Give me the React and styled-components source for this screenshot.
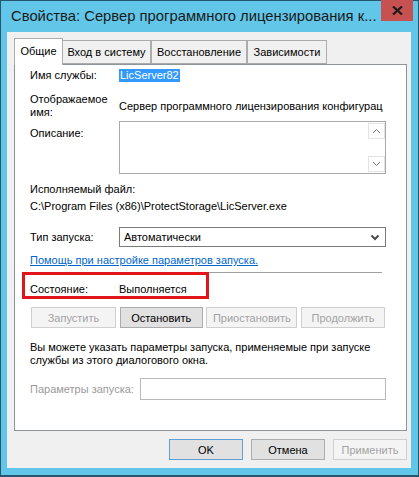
import React from "react";
import styled, {createGlobalStyle} from "styled-components";

const GlobalStyle = createGlobalStyle`
  html, body {
    margin: 0;
    padding: 0;
    background: #ffffff;
  }
  * {
    box-sizing: border-box;
  }
`

const tabs = ["Общие", "Вход в систему", "Восстановление", "Зависимости"];
const tabWidths = [49, 89, 96, 80];

const actions = [
  {label: "Запустить", enabled: false, w: 85},
  {label: "Остановить", enabled: true, w: 83},
  {label: "Приостановить", enabled: false, w: 91},
  {label: "Продолжить", enabled: false, w: 84},
];

export default function App() {
  return (
    <>
      <GlobalStyle />
      <Window>
        <TitleBar>
          <Title>Свойства: Сервер программного лицензирования к...</Title>
          <CloseButton>
            <svg width="11" height="9" viewBox="0 0 11 9">
              <path d="M1 0.5 L10 8.5 M10 0.5 L1 8.5" stroke="#1b1b1b" strokeWidth="2.2" />
            </svg>
          </CloseButton>
        </TitleBar>

        <Client>
          <TabStrip>
            {tabs.map((t, i) => (
              <Tab key={t} $active={i === 0} $w={tabWidths[i]}>{t}</Tab>
            ))}
          </TabStrip>

          <Panel>
            <Row $mt={0}>
              <Label>Имя службы:</Label>
              <Selected>LicServer82</Selected>
            </Row>

            <Row $mt={10}>
              <Label $multi>Отображаемое<br />имя:</Label>
              <Value>Сервер программного лицензирования конфигурац</Value>
            </Row>

            <Row $mt={2} $start>
              <Label $top={4}>Описание:</Label>
              <TextArea>
                <ScrollBar>
                  <ScrollBtn>
                    <svg width="9" height="6" viewBox="0 0 9 6">
                      <path d="M1 5 L4.5 1.5 L8 5" fill="none" stroke="#777" strokeWidth="1" />
                    </svg>
                  </ScrollBtn>
                  <ScrollBtn>
                    <svg width="9" height="6" viewBox="0 0 9 6">
                      <path d="M1 1 L4.5 4.5 L8 1" fill="none" stroke="#777" strokeWidth="1" />
                    </svg>
                  </ScrollBtn>
                </ScrollBar>
              </TextArea>
            </Row>

            <Line $mt={7}>Исполняемый файл:</Line>
            <Line $mt={1}>C:\Program Files (x86)\ProtectStorage\LicServer.exe</Line>

            <Row $mt={13}>
              <Label>Тип запуска:</Label>
              <Combo>
                <span>Автоматически</span>
                <svg width="10" height="7" viewBox="0 0 10 7">
                  <path d="M1.5 1.5 L5 5 L8.5 1.5" fill="none" stroke="#4a4a4a" strokeWidth="2" />
                </svg>
              </Combo>
            </Row>

            <Link $mt={5}>Помощь при настройке параметров запуска.</Link>
            <Separator />

            <StatusRow>
              <Label>Состояние:</Label>
              <Value>Выполняется</Value>
              <Highlight />
            </StatusRow>

            <ActionRow>
              {actions.map(a => (
                <ActionButton key={a.label} $enabled={a.enabled} $w={a.w}>{a.label}</ActionButton>
              ))}
            </ActionRow>

            <Note>
              Вы можете указать параметры запуска, применяемые при запуске<br />
              службы из этого диалогового окна.
            </Note>

            <Row $mt={11}>
              <ParamLabel>Параметры запуска:</ParamLabel>
              <ParamInput />
            </Row>
          </Panel>

          <Footer>
            <DialogButton $default>OK</DialogButton>
            <DialogButton>Отмена</DialogButton>
            <DialogButton $disabled>Применить</DialogButton>
          </Footer>
        </Client>
      </Window>
    </>
  );
}

const Window = styled.div`
  width: 419px;
  height: 477px;
  background: #62c6e8;
  border: 1px solid #24566d;
  border-bottom-width: 2px;
  display: flex;
  flex-direction: column;
  font-family: "Liberation Sans", Arial, sans-serif;
  font-size: 11px;
  color: #000;
`

const TitleBar = styled.div`
  height: 31px;
  display: flex;
  align-items: flex-start;
  justify-content: space-between;
  padding-right: 5px;
`

const Title = styled.div`
  padding-left: 10px;
  padding-top: 7px;
  font-size: 14.8px;
  color: #1a1a1a;
  white-space: nowrap;
`

const CloseButton = styled.div`
  width: 32px;
  height: 21px;
  margin-top: -1px;
  background: #c75050;
  display: flex;
  align-items: center;
  justify-content: center;
`

const Client = styled.div`
  flex: 1;
  margin: 0 7px 7px 6px;
  background: #f0f0f0;
  display: flex;
  flex-direction: column;
  padding: 6px 4px 8px 7px;
`

const TabStrip = styled.div`
  display: flex;
  align-items: flex-end;
  height: 27px;
  padding-left: 1px;
  margin-bottom: -1px;
  position: relative;
  z-index: 1;
`

const Tab = styled.div`
  width: ${p => p.$w}px;
  height: ${p => (p.$active ? 27 : 24)}px;
  margin-left: ${p => (p.$active ? -1 : 0)}px;
  margin-right: ${p => (p.$active ? -1 : 0)}px;
  margin-bottom: ${p => (p.$active ? 0 : 1)}px;
  padding-top: ${p => (p.$active ? 6 : 5)}px;
  text-align: center;
  background: ${p => (p.$active ? "#ffffff" : "#f0f0f0")};
  border: 1px solid #acacac;
  border-bottom: ${p => (p.$active ? "none" : "1px solid #acacac")};
  position: relative;
  z-index: ${p => (p.$active ? 2 : 1)};
  white-space: nowrap;
  color: #000;
`

const Panel = styled.div`
  height: 367px;
  background: #ffffff;
  border: 1px solid #8f959b;
  padding: 2px 20px 0 15px;
  display: flex;
  flex-direction: column;
`

const Row = styled.div`
  display: flex;
  align-items: ${p => (p.$start ? "flex-start" : "center")};
  margin-top: ${p => p.$mt}px;
`

const Label = styled.div`
  width: 89px;
  flex-shrink: 0;
  line-height: ${p => (p.$multi ? 13 : 16)}px;
  padding-top: ${p => p.$top || 0}px;
`

const Value = styled.div`
  line-height: 16px;
  max-width: 267px;
  white-space: nowrap;
  overflow: hidden;
`

const Selected = styled.span`
  background: #3399ff;
  color: #ffffff;
  line-height: 13px;
  padding: 0 1px;
`

const TextArea = styled.div`
  width: 267px;
  height: 53px;
  border: 1px solid #a9a9a9;
  display: flex;
  justify-content: flex-end;
`

const ScrollBar = styled.div`
  width: 17px;
  display: flex;
  flex-direction: column;
  justify-content: space-between;
  padding: 1px 0;
`

const ScrollBtn = styled.div`
  height: 16px;
  border: 1px solid #e3e3e3;
  display: flex;
  align-items: center;
  justify-content: center;
`

const Line = styled.div`
  margin-top: ${p => p.$mt}px;
  line-height: 16px;
  white-space: nowrap;
`

const Combo = styled.div`
  width: 267px;
  height: 20px;
  border: 1px solid #7a7a7a;
  display: flex;
  align-items: center;
  justify-content: space-between;
  padding: 0 5px 0 4px;
`

const Link = styled.div`
  margin-top: ${p => p.$mt}px;
  line-height: 16px;
  color: #0066cc;
  text-decoration: underline;
`

const Separator = styled.div`
  margin-top: 4px;
  width: 352px;
  height: 1px;
  background: #a0a0a0;
`

const StatusRow = styled.div`
  position: relative;
  display: flex;
  align-items: center;
  margin-top: 8px;
`

const Highlight = styled.div`
  position: absolute;
  left: -8px;
  top: -9px;
  width: 187px;
  height: 27px;
  border: 3px solid #e4141b;
`

const ActionRow = styled.div`
  display: flex;
  justify-content: space-between;
  width: 355px;
  margin-top: 10px;
  padding-left: 1px;
`

const ActionButton = styled.div`
  width: ${p => p.$w}px;
  height: 21px;
  display: flex;
  align-items: center;
  justify-content: center;
  border: 1px solid ${p => (p.$enabled ? "#acacac" : "#cfcfcf")};
  background: ${p => (p.$enabled ? "#e1e1e1" : "#f4f4f4")};
  color: ${p => (p.$enabled ? "#000" : "#a3a3a3")};
`

const Note = styled.div`
  margin-top: 13px;
  line-height: 13px;
  white-space: nowrap;
`

const ParamLabel = styled.div`
  width: 110px;
  color: #9a9a9a;
  flex-shrink: 0;
  white-space: nowrap;
`

const ParamInput = styled.div`
  width: 246px;
  height: 22px;
  border: 1px solid #b9b9b9;
`

const Footer = styled.div`
  display: flex;
  justify-content: flex-end;
  gap: 8px;
  margin-top: 8px;
`

const DialogButton = styled.div`
  width: 74px;
  height: 21px;
  display: flex;
  align-items: center;
  justify-content: center;
  border: 1px solid ${p => (p.$default ? "#5e9fd6" : p.$disabled ? "#cfcfcf" : "#adadad")};
  background: ${p => (p.$disabled ? "#f4f4f4" : "#e1e1e1")};
  color: ${p => (p.$disabled ? "#a3a3a3" : "#000")};
`
